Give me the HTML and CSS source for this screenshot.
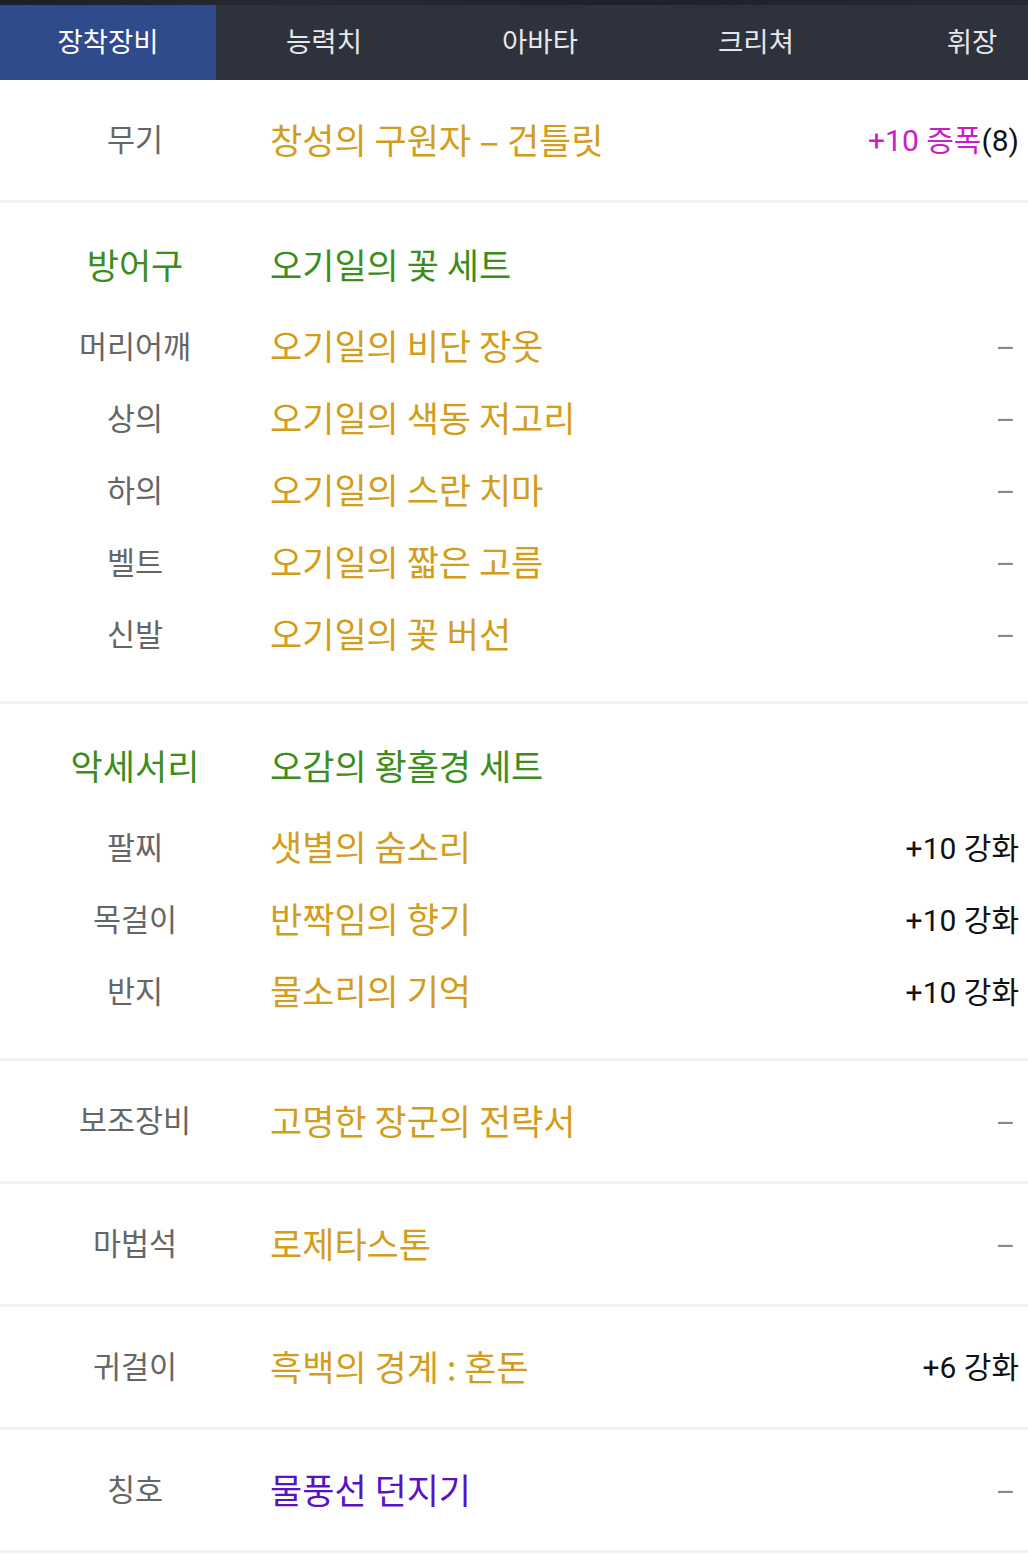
FILE: index.html
```html
<!DOCTYPE html>
<html>
<head>
    <meta charset="utf-8">
    <title>장착장비</title>
    <link rel="stylesheet" href="styles.css">
</head>
<body>
    <div class="top-band"></div>
    <nav class="tabs">
        <a class="tab active">장착장비</a>
        <a class="tab">능력치</a>
        <a class="tab">아바타</a>
        <a class="tab">크리쳐</a>
        <a class="tab">휘장</a>
    </nav>

    <div class="equip">
        <div class="group single">
            <div class="row">
                <span class="slot">무기</span>
                <span class="name gold">창성의 구원자 <span class="dash">-</span> 건틀릿</span>
                <span class="value"><span class="amp">+10 증폭</span>(8)</span>
            </div>
        </div>

        <div class="group set">
            <div class="row head">
                <span class="slot green">방어구</span>
                <span class="name green">오기일의 꽃 세트</span>
                <span class="value"></span>
            </div>
            <div class="row">
                <span class="slot">머리어깨</span>
                <span class="name gold">오기일의 비단 장옷</span>
                <span class="value none">-</span>
            </div>
            <div class="row">
                <span class="slot">상의</span>
                <span class="name gold">오기일의 색동 저고리</span>
                <span class="value none">-</span>
            </div>
            <div class="row">
                <span class="slot">하의</span>
                <span class="name gold">오기일의 스란 치마</span>
                <span class="value none">-</span>
            </div>
            <div class="row">
                <span class="slot">벨트</span>
                <span class="name gold">오기일의 짧은 고름</span>
                <span class="value none">-</span>
            </div>
            <div class="row">
                <span class="slot">신발</span>
                <span class="name gold">오기일의 꽃 버선</span>
                <span class="value none">-</span>
            </div>
        </div>

        <div class="group set">
            <div class="row head">
                <span class="slot green">악세서리</span>
                <span class="name green">오감의 황홀경 세트</span>
                <span class="value"></span>
            </div>
            <div class="row">
                <span class="slot">팔찌</span>
                <span class="name gold">샛별의 숨소리</span>
                <span class="value">+10 강화</span>
            </div>
            <div class="row">
                <span class="slot">목걸이</span>
                <span class="name gold">반짝임의 향기</span>
                <span class="value">+10 강화</span>
            </div>
            <div class="row">
                <span class="slot">반지</span>
                <span class="name gold">물소리의 기억</span>
                <span class="value">+10 강화</span>
            </div>
        </div>

        <div class="group single">
            <div class="row">
                <span class="slot">보조장비</span>
                <span class="name gold">고명한 장군의 전략서</span>
                <span class="value none">-</span>
            </div>
        </div>

        <div class="group single">
            <div class="row">
                <span class="slot">마법석</span>
                <span class="name gold">로제타스톤</span>
                <span class="value none">-</span>
            </div>
        </div>

        <div class="group single">
            <div class="row">
                <span class="slot">귀걸이</span>
                <span class="name gold">흑백의 경계 : 혼돈</span>
                <span class="value">+6 강화</span>
            </div>
        </div>

        <div class="group single">
            <div class="row">
                <span class="slot">칭호</span>
                <span class="name purple">물풍선 던지기</span>
                <span class="value none">-</span>
            </div>
        </div>
    </div>
</body>
</html>
```

FILE: styles.css
```css
body {
    margin: 0;
    background-color: #fff;
    font-family: Roboto, "Noto Sans CJK KR", sans-serif;
    overflow: hidden;
}
.top-band {
    height: 5px;
    background: linear-gradient(90deg, #1b1f27, #262a33 30%, #1d2129 60%, #252932);
}
.tabs {
    display: flex;
    height: 75px;
    background-color: #2d323d;
    overflow: hidden;
}
.tab {
    flex: 0 0 216px;
    display: flex;
    align-items: center;
    justify-content: center;
    color: #e6e7ea;
    font-family: "Noto Sans CJK KR", sans-serif;
    font-size: 27.5px;
    padding-bottom: 5px;
    box-sizing: border-box;
}
.tab.active {
    background-color: #2f4b8c;
    color: #fff;
}
.group {
    border-bottom: 3px solid #f2f2f2;
}
.group.set {
    padding: 27px 0 30px;
}
.row {
    display: grid;
    grid-template-columns: 270px 1fr auto;
    align-items: center;
    height: 72px;
    padding-bottom: 5px;
    box-sizing: border-box;
}
.group.single .row {
    height: 120px;
    padding-bottom: 4px;
}
.row.head {
    margin-bottom: 9px;
}
.slot {
    text-align: center;
    color: #666;
    font-family: "Noto Sans CJK KR", sans-serif;
    font-size: 30.5px;
}
.slot.green {
    font-size: 35px;
}
.name {
    font-family: "Noto Sans CJK KR", sans-serif;
    font-size: 35px;
    white-space: nowrap;
}
.name .dash {
    display: inline-block;
    transform: scaleX(1.8);
    margin: 0 4px;
}
.value {
    padding-right: 9px;
    color: #111;
    font-size: 30px;
    white-space: nowrap;
}
.value.none {
    color: #888;
    font-size: 42px;
    font-weight: 300;
    line-height: 1;
    padding-top: 5px;
    transform: scaleX(1.5);
    transform-origin: right center;
}
.gold {
    color: #d39d1c;
}
.green {
    color: #3c8d1c;
}
.purple {
    color: #5a12c6;
}
.amp {
    color: #c81ec8;
}
```
